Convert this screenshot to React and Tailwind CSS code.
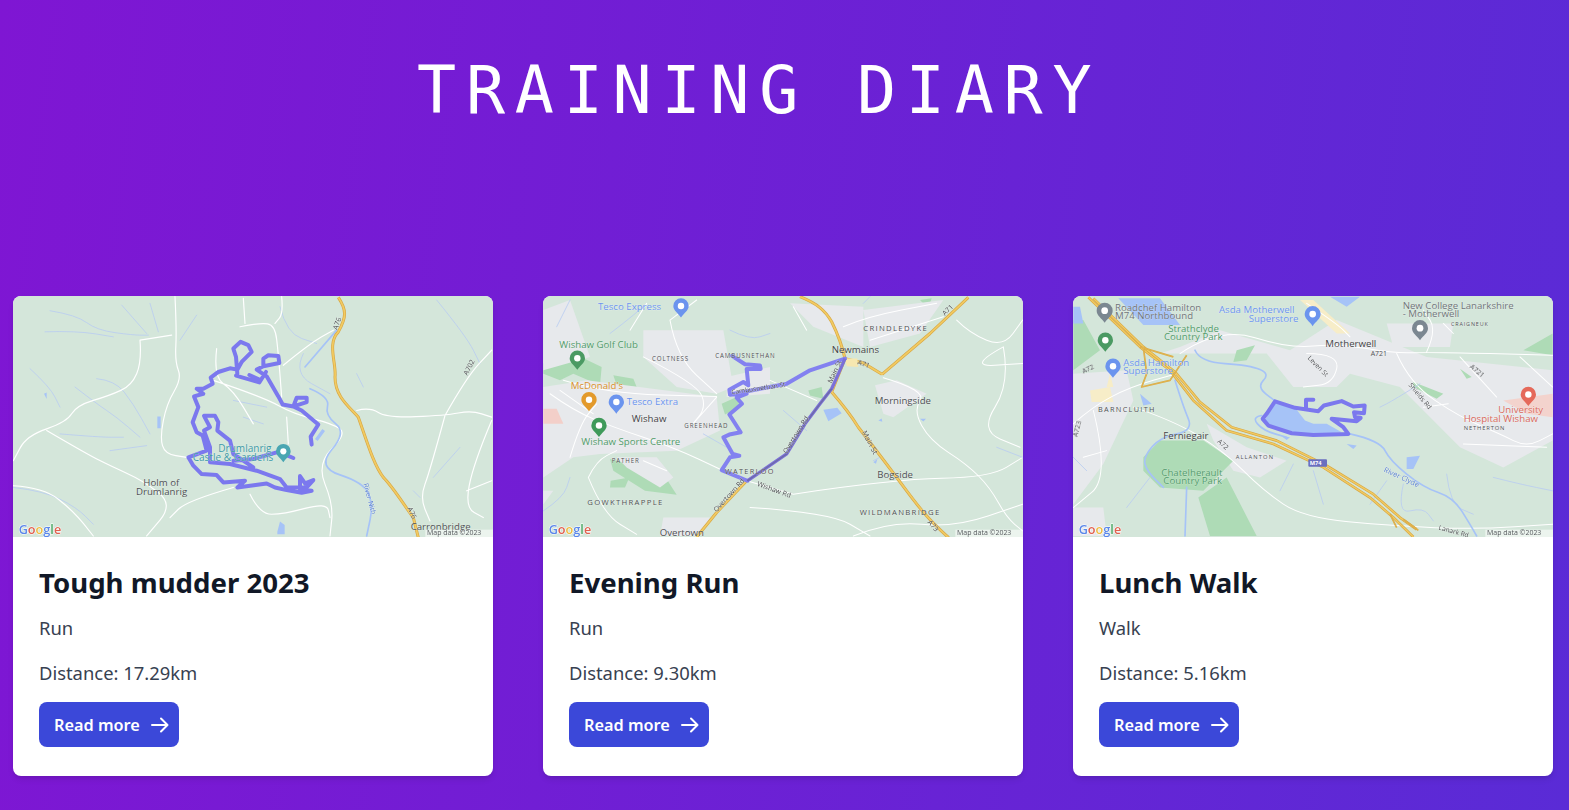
import React from "react";

// map drawings use the coordinates of the 3x crops, so viewBox is offset
const LAND = "#d4e6da";
const ROUTE = "#7b78ee";
const ROAD = "#ffffff";
const STREAM = "#b9cdf0";
const WATER = "#a6c3f7";
const PARK = "#aedbb6";
const URBAN = "#e7e9ec";
const YELLOW = "#f2cb62";
const YELLOW_EDGE = "#d8a845";

// rounds the corners of an "M x y L x y" polyline so roads don't look angular
const smooth = (d) =>
  d
    .split("M")
    .filter((part) => part.trim())
    .map((part) => {
      const pts = part
        .trim()
        .split("L")
        .map((pair) => pair.trim().split(/\s+/).map(Number));
      if (pts.length < 3) return `M${part}`;
      let out = `M${pts[0][0]} ${pts[0][1]}`;
      for (let i = 1; i < pts.length - 1; i += 1) {
        const mx = (pts[i][0] + pts[i + 1][0]) / 2;
        const my = (pts[i][1] + pts[i + 1][1]) / 2;
        out += ` Q${pts[i][0]} ${pts[i][1]} ${mx} ${my}`;
      }
      const last = pts[pts.length - 1];
      return `${out} L${last[0]} ${last[1]}`;
    })
    .join(" ");

const Label = ({ x, y, size = 25, fill = "#4d4f52", spacing = 0, rotate, children }) => (
  <text
    x={x}
    y={y}
    fontSize={size * 1.16}
    fill={fill}
    letterSpacing={spacing * 1.3}
    transform={rotate ? `rotate(${rotate} ${x} ${y})` : undefined}
    stroke="#ffffff"
    strokeOpacity="0.45"
    strokeWidth="2"
    paintOrder="stroke"
    fontFamily="'Open Sans', Roboto, sans-serif"
  >
    {children}
  </text>
);

const Pin = ({ x, y, color, r = 24 }) => (
  <g>
    <path d={`M${x - r} ${y} a${r} ${r} 0 1 1 ${r * 2} 0 c0 ${r * 0.6} -${r * 0.6} ${r * 0.9} -${r} ${r * 1.5} c-${r * 0.4} -${r * 0.6} -${r} -${r * 0.9} -${r} -${r * 1.5}z`} fill={color} />
    <circle cx={x} cy={y} r={r * 0.42} fill="#ffffff" />
  </g>
);

const Yellow = ({ d, w = 9 }) => (
  <g fill="none" strokeLinejoin="round">
    <path d={d} stroke={YELLOW_EDGE} strokeWidth={w} />
    <path d={d} stroke={YELLOW} strokeWidth={w - 4} />
  </g>
);

const Roads = ({ d, w = 3.5 }) => <path d={smooth(d)} fill="none" stroke={ROAD} strokeWidth={w} strokeLinecap="round" />;
const Streams = ({ d, w = 2.5, color = STREAM }) => <path d={smooth(d)} fill="none" stroke={color} strokeWidth={w} strokeLinecap="round" />;
const Route = ({ d, w = 12, color = ROUTE }) => (
  <path d={d} fill="none" stroke={color} strokeWidth={w} strokeLinejoin="round" strokeLinecap="round" />
);

const MapFooter = () => (
  <g>
    <text x="56" y="730" fontSize="38" fontWeight="600" stroke="#ffffff" strokeWidth="3" paintOrder="stroke" fontFamily="'Open Sans', sans-serif">
      <tspan fill="#5b87e8">G</tspan>
      <tspan fill="#e0604f">o</tspan>
      <tspan fill="#eebc3f">o</tspan>
      <tspan fill="#5b87e8">g</tspan>
      <tspan fill="#4ea866">l</tspan>
      <tspan fill="#e0604f">e</tspan>
    </text>
    <rect x="1276" y="716" width="203" height="24" fill="#ffffff" fillOpacity="0.55" />
    <text x="1281" y="733" fontSize="21" fill="#55585c" fontFamily="'Open Sans', sans-serif">Map data ©2023</text>
  </g>
);

const MapShell = ({ children }) => (
  <svg viewBox="39 18 1440 720" preserveAspectRatio="none" className="block h-[241px] w-full blur-[0.6px]">
    <rect x="0" y="0" width="1600" height="800" fill={LAND} />
    {children}
    <MapFooter />
  </svg>
);

const DrumlanrigMap = () => (
  <MapShell>
    <Streams d="M150 62 L230 75 L290 120 L400 135 L445 135 M135 125 L230 122 L340 140 M365 45 L440 130 M450 40 L475 125 M540 150 L590 75 M90 235 L150 290 L180 350 M225 290 L290 340 L350 380 L420 440 M290 265 L345 270 L400 340 L450 430 M180 430 L300 440 L370 440 M330 480 L440 465 M40 590 L130 600 L230 650 L280 700 M700 330 L800 350 M730 380 L790 400 M840 50 L860 130 L950 160 M910 190 L880 250 L990 310 M1310 30 L1400 140 L1440 220 M1070 250 L1090 290 M1380 470 L1300 560 M1240 600 L1260 620" />
    <Roads d="M525 20 L530 120 L525 215 L545 265 L500 340 L480 440 L495 490 L560 500 M420 150 L515 135 M420 150 L425 215 L395 285 L330 315 L230 345 L200 395 L80 435 L40 510 M140 420 L260 490 L330 525 L430 570 L520 640 L440 735 M40 585 L130 590 L220 660 L280 735 M720 110 L780 98 L825 105 L835 190 L845 320 M650 175 L640 260 L700 300 L760 400 M730 25 L735 100 M845 20 L850 70 L825 100 M850 225 L930 160 L1000 120 M640 270 L790 320 L880 370 L1000 400 L1040 430 L950 520 L1000 640 L990 735 M860 380 L865 460 M1070 360 L1110 350 L1160 382 L1335 375 L1415 360 L1475 380 M1335 375 L1290 540 L1260 620 L1290 690 M1335 375 L1400 260 L1475 180 M1475 390 L1420 520 L1395 650 L1450 680 M1400 600 L1475 570 M700 590 L560 630 L510 680 M750 610 L780 670 L850 670 L980 635 L990 680" />
    <Streams w="5" color={WATER} d="M930 295 L990 320 L975 375 L1040 425 L950 530 L1090 575 L1120 640 L1100 735 M1010 120 L915 230" />
    <path d="M132 310 l8 -4 l0 20z M472 378 l10 0 l0 35 l-10 0z M832 722 l8 -30 l14 10 l0 28 l-22 0z M945 445 l22 -30 l8 6 l-22 30z" fill={WATER} />
    <Yellow d="M1015 22 C1040 60 1040 80 1015 125 C980 160 1010 220 1005 260 C1005 320 1050 350 1075 380 C1100 450 1120 520 1150 560 C1180 590 1210 640 1240 680 L1255 740" />
    <Route d="M935 462 L932 438 L955 402 L905 360 L880 348 L848 342 L835 318 L800 258 L770 238 L790 228 L790 205 L805 195 L835 197 L838 218 L790 228 M778 268 L748 254 M708 256 L778 276 L798 245 M712 250 L708 200 L700 175 L722 155 L745 165 L755 185 L725 215 L712 238 L690 234 L655 245 L632 262 L638 280 L610 295 L590 295 L610 310 L582 318 L595 350 L578 395 L590 425 L608 435 L620 480 L565 500 L580 525 L605 550 L650 553 L670 575 L735 570 L712 590 L800 578 L825 590 L860 598 L905 606 L935 600 L900 596 L900 556 L915 578 L940 568 L920 590 L860 590 L840 565 L770 540 L690 520 L630 515 L630 470 L612 420 L630 410 L612 376 L645 376 L655 395 L652 420 L690 450 L700 490 L760 530 M880 502 L850 490 L830 485 L760 505 L700 510 M880 348 L890 322 L920 322 L920 335 L890 345" />
    <Pin x="850" y="482" r="22" color="#4aa6b2" />
    <Label x="655" y="485" size="26" fill="#3d9aa6">Drumlanrig</Label>
    <Label x="578" y="511" size="26" fill="#3d9aa6">Castle &amp; Gardens</Label>
    <Label x="430" y="585" size="25">Holm of</Label>
    <Label x="408" y="612" size="25">Drumlanrig</Label>
    <Label x="1232" y="716" size="25">Carronbridge</Label>
    <Label x="1012" y="120" size="18" rotate="-70">A76</Label>
    <Label x="1222" y="652" size="18" rotate="65">A76</Label>
    <Label x="1402" y="256" size="18" rotate="-62">A702</Label>
    <Label x="1090" y="580" size="18" fill="#5a7fd0" rotate="75">River Nith</Label>
  </MapShell>
);

const WishawMap = () => (
  <MapShell>
    <path d="M40 220 L110 180 L215 230 L210 285 L130 250 L90 270 L40 250z M40 360 L100 400 M125 385 L190 400 L185 460 L120 440z M575 340 L620 320 L630 350 L585 372z M240 505 L400 550 L440 612 L345 600 L250 540z M242 570 L298 560 L285 590 L240 590z M835 300 L875 290 L880 325 L840 315z M250 255 L310 265 L320 290 L260 285z M1170 30 L1205 25 L1195 55z" fill={PARK} />
    <path d="M40 60 L120 30 L180 200 L40 240z M40 290 L170 270 L560 320 L570 420 L440 480 L210 490 L130 500 L40 560z M40 600 L70 600 L40 640z M340 120 L580 120 L610 290 L560 310 L440 290 L340 200z M780 40 L1000 50 L1000 170 L950 150 L850 110z M1000 60 L1240 30 L1170 130 L1020 170z M1035 285 L1100 270 L1190 310 L1090 380 L1060 370z M260 500 L380 500 L430 560 L390 590 L290 530z M400 680 L540 680 L510 735 L390 735z M590 260 L720 230 L720 310 L590 320z" fill={URBAN} />
    <path d="M40 355 L80 355 L100 400 L40 400z" fill="#f3cfc9" />
    <Roads w="3" d="M90 300 L190 370 M100 270 L230 310 L560 318 M120 500 L150 400 L200 340 M60 310 L130 360 L250 410 L430 470 L580 540 M420 90 L440 200 L560 310 M340 200 L500 280 L530 350 L480 410 M300 120 L350 40 M500 30 L420 90 M175 560 L200 510 L260 480 M175 560 L220 670 L320 730 M790 50 L830 120 M940 110 L1010 80 L1220 40 M1020 150 L1240 80 M1060 262 L1190 300 L1150 360 L1200 450 L1310 520 L1380 590 L1430 680 L1478 720 M1420 170 L1440 280 L1350 420 L1470 470 M1280 90 L1320 130 L1420 170 L1478 90 M1420 170 L1310 230 L1478 220 M790 610 L1090 565 L1380 560 L1478 500 M650 570 L790 610 M720 270 L860 330 M970 735 L1080 690 L1270 710 L1478 640 M660 650 L900 665 L1020 735 M560 320 L480 410 M340 510 L410 540" />
    <Streams d="M120 30 L80 110 M240 130 L280 100 L340 50 M600 120 L660 150 L720 130 M1000 40 L1020 20 M760 360 L830 420 M1030 510 L1050 500 M40 660 L100 620 L120 560 M1400 470 L1478 500 M520 430 L590 470" />
    <path d="M880 358 L922 352 L935 368 L895 392z M1170 385 l18 0 l-8 8z M1045 390 l10 -6 l2 10z M1030 515 l12 -10 l-4 14z" fill={WATER} />
    <Yellow d="M810 20 C860 40 885 60 905 95 C920 125 935 160 945 205 L905 305 C940 345 960 370 985 410 C1040 480 1100 560 1130 600 C1175 660 1200 690 1256 740" />
    <Yellow d="M1056 252 L1200 130 L1315 22 M945 205 L1000 218 L1056 252" />
    <Yellow d="M650 570 L560 665 L500 738" />
    <path d="M945 205 L982 205 L985 230 L950 228z" fill="#f6e7b0" />
    <Route color="#8381f0" d="M606 197 L645 222 L690 226 L692 236 L650 236 L655 285 L640 275 L598 298 L600 312 L650 310 L620 322 L636 340 L598 372 L632 425 L598 432 L580 440 L608 490 L628 495 L600 500 L575 538 L652 570" />
    <Route color="#8381f0" d="M600 312 L770 280 L840 240 L945 205" />
    <path d="M652 570 L770 490 L825 400 L870 340 L905 295 L945 205" fill="none" stroke="#7b70d8" strokeWidth="10" strokeLinejoin="round" />
    <path d="M652 570 L770 490 L825 400 L870 340 L905 295" fill="none" stroke="#6d6aa8" strokeWidth="4" strokeLinejoin="round" />
    <Pin x="453" y="48" r="23" color="#6b94ee" />
    <Pin x="142" y="204" r="23" color="#4b9a63" />
    <Pin x="177" y="328" r="23" color="#e39a2b" />
    <Pin x="259" y="335" r="23" color="#6b94ee" />
    <Pin x="207" y="405" r="23" color="#3f9a5a" />
    <Label x="204" y="60" size="25" fill="#6b94ee">Tesco Express</Label>
    <Label x="88" y="172" size="25" fill="#4f9a68">Wishaw Golf Club</Label>
    <Label x="122" y="296" size="25" fill="#d8902a">McDonald's</Label>
    <Label x="290" y="344" size="25" fill="#6b94ee">Tesco Extra</Label>
    <Label x="305" y="393" size="25" fill="#3f4144">Wishaw</Label>
    <Label x="154" y="462" size="25" fill="#4f9a68">Wishaw Sports Centre</Label>
    <Label x="366" y="213" size="16" spacing="2">COLTNESS</Label>
    <Label x="556" y="204" size="16" spacing="2">CAMBUSNETHAN</Label>
    <Label x="463" y="413" size="16" spacing="2">GREENHEAD</Label>
    <Label x="245" y="516" size="16" spacing="2">PATHER</Label>
    <Label x="585" y="551" size="19" spacing="3">WATERLOO</Label>
    <Label x="172" y="643" size="20" spacing="3">GOWKTHRAPPLE</Label>
    <Label x="389" y="735" size="25">Overtown</Label>
    <Label x="905" y="188" size="25" fill="#3f4144">Newmains</Label>
    <Label x="1034" y="342" size="25">Morningside</Label>
    <Label x="1042" y="563" size="25">Bogside</Label>
    <Label x="1000" y="122" size="20" spacing="3">CRINDLEDYKE</Label>
    <Label x="989" y="672" size="20" spacing="3">WILDMANBRIDGE</Label>
    <Label x="982" y="220" size="18" rotate="20">A71</Label>
    <Label x="1245" y="78" size="18" rotate="-45">A71</Label>
    <Label x="1192" y="695" size="18" rotate="50">A73</Label>
    <Label x="995" y="425" size="19" rotate="62">Main St</Label>
    <Label x="905" y="280" size="18" rotate="-65">Main St</Label>
    <Label x="680" y="585" size="18" rotate="20">Wishaw Rd</Label>
    <Label x="560" y="665" size="18" rotate="-48">Overtown Rd</Label>
    <Label x="770" y="490" size="18" rotate="-58">Overtown Rd</Label>
    <Label x="605" y="312" size="17" rotate="-8">Cambusnethan St</Label>
  </MapShell>
);

const MotherwellMap = () => (
  <MapShell>
    <path d="M300 190 L360 170 L480 120 L690 180 L830 90 L1100 200 L1478 240 L1478 450 L1330 530 L1200 470 L1020 290 L870 250 L830 290 L700 290 L620 190z M40 250 L200 240 L220 330 L130 520 L40 640z M440 400 L560 470 L680 510 L600 560 L520 540 L460 450z M40 650 L130 650 L140 735 L40 735z M980 100 L1180 100 L1170 170 L1000 170z" fill={URBAN} />
    <path d="M40 90 L70 90 L120 180 L40 240z M530 180 L585 165 L560 210 L520 215z M250 500 L300 450 L430 450 L520 510 L430 600 L300 590 L250 540z M415 620 L500 560 L590 735 L450 735z M1060 275 L1150 310 L1130 325 L1060 290z M1390 180 L1478 130 L1478 195z M1200 235 L1235 260 L1220 265z" fill={PARK} />
    <path d="M90 300 L150 290 L160 335 L95 335z M720 30 L760 30 L870 130 L830 130z M150 250 L160 290 L140 290z" fill="#f7edc8" />
    <path d="M1330 330 L1478 310 L1478 380 L1400 370z" fill="#f3d3cd" />
    <path d="M175 25 L300 25 L360 105 L250 105z M40 50 L60 50 L70 100 L40 100z M810 20 L900 20 L860 50z" fill={WATER} />
    <Roads w="3" d="M360 190 L480 110 L690 175 L830 160 L1010 190 L1100 185 L1478 195 M740 40 L830 100 L870 140 M1100 185 L1130 120 L1090 60 M1010 190 L1050 280 L1200 380 L1320 430 L1400 470 L1478 430 M40 400 L95 350 L210 290 L350 250 M100 360 L150 560 L40 650 M220 350 L340 390 L490 480 L610 600 L730 680 L1000 705 L1250 715 L1478 700 M740 190 L840 190 L820 280 L730 290 M1090 350 L1165 340 M1200 200 L1310 320 M1210 460 L1460 470 M1380 200 L1478 290 M70 500 L140 480 M1150 100 L1180 130" />
    <Streams d="M1080 280 L1000 330 L960 350 M700 520 L660 600 M760 540 L790 640 M980 570 L930 640 M1030 580 L1010 670 L1090 650 L1120 690 M1160 550 L1170 640 L1240 670 M1300 560 L1380 580 L1478 600 M40 500 L80 540 M200 650 L270 560" />
    <Streams w="5" color={WATER} d="M405 180 L420 215 L570 225 L630 250 L590 290 L650 335 M605 375 L575 380 L610 420 L680 440 M870 430 L960 450 L990 510 L1090 590 L1180 620 L1230 700 L1250 735 M345 270 L370 350 L400 420 L300 440 L250 500 L260 540 L310 590 M380 590 L375 735" />
    <path d="M640 340 L700 345 L735 390 L760 400 L800 400 L845 425 L760 432 L660 420 L612 395z" fill={WATER} />
    <path d="M1040 500 L1080 495 L1060 535 L1040 535z M860 460 L890 465 L880 475z M665 437 L690 440 L680 448z M240 310 L275 340 L250 345z" fill={WATER} />
    <Yellow w="8" d="M85 22 L240 170 L330 240 L400 330 L500 420 L640 460 L790 530 L930 620 L1000 680 L1060 738" />
    <Yellow w="8" d="M100 25 L250 170 L345 245 L420 335 L515 410 L650 450 L800 525 L940 610 L1020 680 L1070 715" />
    <Yellow w="5" d="M250 170 L260 250 L245 290 L330 270 L380 195 M240 170 L340 200 M990 670 L1010 710 M1030 685 L1075 718" />
    <rect x="745" y="506" width="56" height="22" rx="3" fill="#6a6fc0" />
    <text x="749" y="523" fontSize="17" fontWeight="700" fill="#ffffff" fontFamily="'Open Sans', sans-serif">M74</text>
    <Route d="M645 333 L705 352 L775 362 L792 345 L845 332 L880 348 L914 345 L912 368 L882 365 L885 380 L902 382 L890 392 L815 385 L850 410 L865 430 L760 433 L695 428 L625 405 L608 385 L620 370 L645 333 M738 352 L738 328 L760 328" />
    <Pin x="134" y="62" r="24" color="#7b8791" />
    <Pin x="136" y="150" r="23" color="#4b9a63" />
    <Pin x="159" y="228" r="23" color="#6b94ee" />
    <Pin x="758" y="72" r="24" color="#6b94ee" />
    <Pin x="1080" y="114" r="24" color="#7b8791" />
    <Pin x="1405" y="312" r="23" color="#e5695a" />
    <Label x="165" y="62" size="25" fill="#6f7478">Roadchef Hamilton</Label>
    <Label x="165" y="87" size="25" fill="#6f7478">M74 Northbound</Label>
    <Label x="325" y="125" size="25" fill="#4f9a68">Strathclyde</Label>
    <Label x="312" y="150" size="25" fill="#4f9a68">Country Park</Label>
    <Label x="477" y="70" size="25" fill="#6b94ee">Asda Motherwell</Label>
    <Label x="566" y="95" size="25" fill="#6b94ee">Superstore</Label>
    <Label x="1028" y="57" size="25" fill="#6f7478">New College Lanarkshire</Label>
    <Label x="1028" y="82" size="25" fill="#6f7478">- Motherwell</Label>
    <Label x="1173" y="109" size="14" spacing="2">CRAIGNEUK</Label>
    <Label x="796" y="171" size="25" fill="#3f4144">Motherwell</Label>
    <Label x="190" y="226" size="25" fill="#6b94ee">Asda Hamilton</Label>
    <Label x="190" y="251" size="25" fill="#6b94ee">Superstore</Label>
    <Label x="114" y="365" size="19" spacing="3">BARNCLUITH</Label>
    <Label x="310" y="446" size="25" fill="#3f4144">Ferniegair</Label>
    <Label x="527" y="505" size="15" spacing="2.5">ALLANTON</Label>
    <Label x="304" y="556" size="25" fill="#4f9a68">Chatelherault</Label>
    <Label x="310" y="581" size="25" fill="#4f9a68">Country Park</Label>
    <Label x="1315" y="369" size="25" fill="#d9685b">University</Label>
    <Label x="1211" y="393" size="25" fill="#d9685b">Hospital Wishaw</Label>
    <Label x="1211" y="417" size="15" spacing="2">NETHERTON</Label>
    <Label x="932" y="197" size="18">A721</Label>
    <Label x="1228" y="232" size="18" rotate="40">A721</Label>
    <Label x="70" y="250" size="18" rotate="-25">A72</Label>
    <Label x="470" y="455" size="18" rotate="40">A72</Label>
    <Label x="52" y="440" size="18" rotate="-75">A723</Label>
    <Label x="742" y="205" size="17" rotate="45">Leven St</Label>
    <Label x="1045" y="285" size="17" rotate="50">Shields Rd</Label>
    <Label x="970" y="542" size="19" fill="#5a7fd0" rotate="25">River Clyde</Label>
    <Label x="1135" y="716" size="17" rotate="15">Lanark Rd</Label>
  </MapShell>
);

const ACTIVITIES = [
  { title: "Tough mudder 2023", type: "Run", distance: "17.29", map: <DrumlanrigMap /> },
  { title: "Evening Run", type: "Run", distance: "9.30", map: <WishawMap /> },
  { title: "Lunch Walk", type: "Walk", distance: "5.16", map: <MotherwellMap /> }
];

const ActivityCard = ({ activity }) => (
  <div className="overflow-hidden rounded-lg bg-white shadow-md">
    {activity.map}
    <div className="flex h-[239px] flex-col items-start px-[26px] pt-[24px]">
      <h5 className="text-[27.6px] leading-[42px] font-bold text-[#111827]">{activity.title}</h5>
      <p className="mt-[2px] text-[18.4px] leading-[45px] text-[#374151]">{activity.type}</p>
      <p className="text-[18.4px] leading-[45px] text-[#374151]">Distance: {activity.distance}km</p>
      <a className="mt-[7px] flex h-[45px] w-[140px] items-center rounded-lg bg-[#3b48d9] pl-[15px] text-[16.3px] font-semibold text-white">
        <span className="pt-[2px]">Read more</span>
        <svg width="18" height="16" viewBox="0 0 18 16" fill="none" stroke="currentColor" strokeWidth="2" strokeLinecap="round" strokeLinejoin="round" className="ml-[11px]">
          <path d="M1 8h15M10 1.5l6.5 6.5-6.5 6.5" />
        </svg>
      </a>
    </div>
  </div>
);

const App = () => (
  <div className="h-[810px] overflow-hidden bg-[linear-gradient(97deg,#7f16d3,#5a2bd6)] font-['Noto_Sans',sans-serif]">
    <h1 className="pl-[417px] pt-[52px] font-['DejaVu_Sans_Mono',monospace] text-[65px] leading-[77px] tracking-[9.75px] text-white">
      TRAINING DIARY
    </h1>
    <div className="mt-[167px] grid grid-cols-3 gap-[50px] pl-[13px] pr-[16px]">
      {ACTIVITIES.map((activity) => (
        <ActivityCard activity={activity} key={activity.title} />
      ))}
    </div>
  </div>
);

export default App;
